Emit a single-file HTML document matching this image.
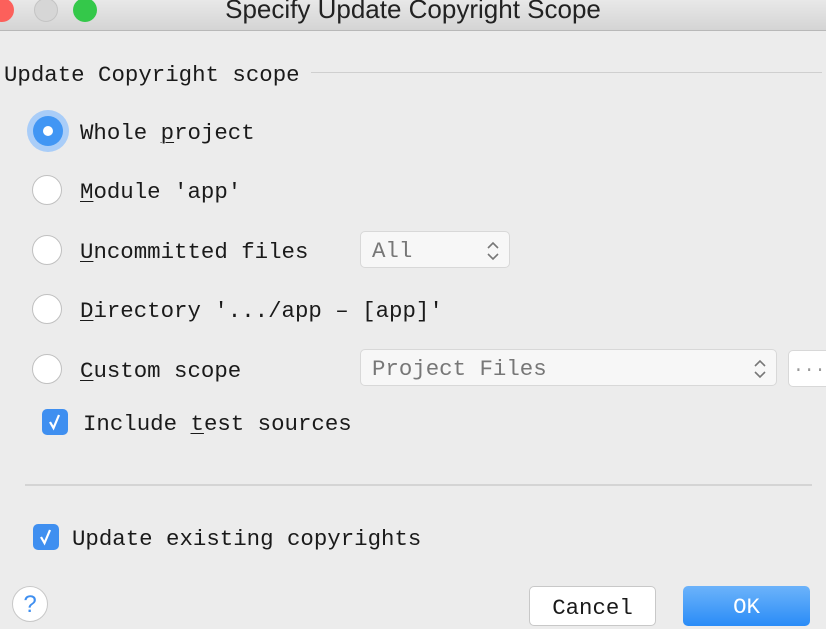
<!DOCTYPE html>
<html><head><style>
body{margin:0;width:826px;height:614px;overflow:hidden;background:#ececec;position:relative;font-family:"Liberation Mono",monospace;font-size:22.4px;color:#1a1a1a}
.a{position:absolute;white-space:pre}
.tb{position:absolute;left:0;top:0;width:826px;height:30px;background:linear-gradient(#e8e8e8,#d4d4d4);border-bottom:1px solid #b8b8b8}
.dot{position:absolute;top:-2px;width:24px;height:24px;border-radius:50%}
.r{position:absolute;left:32px;width:30px;height:30px;border-radius:50%;background:#fff;border:1px solid #c0c0c0;box-sizing:border-box}
.cb{position:absolute;width:26px;height:26px;border-radius:5px;background:#3f8ff0}
.cmb{position:absolute;background:#f7f7f7;border:1px solid #d8d8d8;border-radius:5px;box-sizing:border-box;color:#777}
u{text-decoration-thickness:1px;text-underline-offset:3px}
svg.ch{position:absolute;top:9px;right:9px}
</style></head><body>
<div class="tb">
<div class="dot" style="left:-10px;background:#fc605b"></div>
<div class="dot" style="left:34px;background:#d6d6d6;border:1px solid #c4c4c4;box-sizing:border-box"></div>
<div class="dot" style="left:73px;background:#34c84a"></div>
<div class="a" style="left:0;width:826px;text-align:center;top:-6px;font-family:'Liberation Sans',sans-serif;font-size:26px;color:#222">Specify Update Copyright Scope</div>
</div>
<div class="a" style="left:4px;top:62px">Update Copyright scope</div>
<div class="a" style="left:311px;top:72px;width:511px;height:1px;background:#cfcfcf"></div>

<div style="position:absolute;left:27px;top:110px;width:42px;height:42px;border-radius:50%;background:#a9cdf8"></div>
<div style="position:absolute;left:33px;top:116px;width:30px;height:30px;border-radius:50%;background:#4196f4"></div>
<div style="position:absolute;left:43px;top:126px;width:10px;height:10px;border-radius:50%;background:#fff"></div>
<div class="a" style="left:80px;top:120px">Whole <u>p</u>roject</div>

<div class="r" style="top:175px"></div>
<div class="a" style="left:80px;top:179px"><u>M</u>odule 'app'</div>
<div class="r" style="top:235px"></div>
<div class="a" style="left:80px;top:239px"><u>U</u>ncommitted files</div>
<div class="cmb" style="left:360px;top:231px;width:150px;height:37px"><span class="a" style="left:11px;top:6px">All</span><svg class="ch" width="14" height="20" viewBox="0 0 14 20"><path d="M2 7L7 2L12 7M2 13L7 18L12 13" fill="none" stroke="#777" stroke-width="1.6"/></svg></div>
<div class="r" style="top:294px"></div>
<div class="a" style="left:80px;top:298px"><u>D</u>irectory '.../app – [app]'</div>
<div class="r" style="top:354px"></div>
<div class="a" style="left:80px;top:358px"><u>C</u>ustom scope</div>
<div class="cmb" style="left:360px;top:349px;width:417px;height:37px"><span class="a" style="left:11px;top:6px">Project Files</span><svg class="ch" width="14" height="20" viewBox="0 0 14 20"><path d="M2 7L7 2L12 7M2 13L7 18L12 13" fill="none" stroke="#777" stroke-width="1.6"/></svg></div>
<div class="cmb" style="left:788px;top:350px;width:50px;height:37px;background:#fff"><span class="a" style="left:4px;top:6px;font-size:18px;color:#999">...</span></div>

<div class="cb" style="left:42px;top:409px"><svg width="26" height="26"><path d="M8 13L11.5 19L17 6" fill="none" stroke="#fff" stroke-width="2.2"/></svg></div>
<div class="a" style="left:83px;top:411px">Include <u>t</u>est sources</div>
<div class="a" style="left:25px;top:484px;width:787px;height:2px;background:#d4d4d4"></div>
<div class="cb" style="left:33px;top:524px"><svg width="26" height="26"><path d="M8 13L11.5 19L17 6" fill="none" stroke="#fff" stroke-width="2.2"/></svg></div>
<div class="a" style="left:72px;top:526px">Update existing copyrights</div>

<div style="position:absolute;left:12px;top:586px;width:36px;height:36px;border-radius:50%;background:#fff;border:1px solid #c8c8c8;box-sizing:border-box;color:#3f8ff0;font-family:'Liberation Sans';font-size:24px;text-align:center;line-height:36px">?</div>
<div style="position:absolute;left:529px;top:586px;width:127px;height:40px;border-radius:5px;background:#fff;border:1px solid #c8c8c8;box-sizing:border-box;text-align:center;line-height:42px">Cancel</div>
<div style="position:absolute;left:683px;top:586px;width:127px;height:40px;border-radius:5px;background:linear-gradient(#6cb3fa,#2a8cf7);color:#fff;text-align:center;line-height:42px">OK</div>
</body></html>
